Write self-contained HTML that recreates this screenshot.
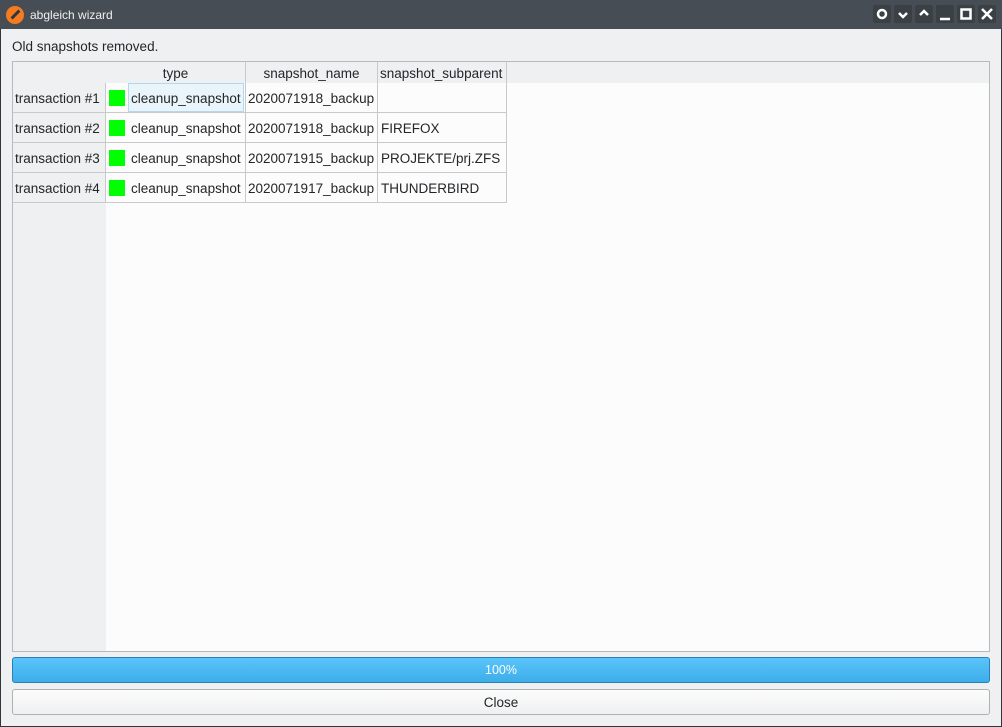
<!DOCTYPE html><html><head><style>
*{margin:0;padding:0;box-sizing:border-box}
body{width:1002px;height:727px;background:#31363b;font-family:"Liberation Sans","DejaVu Sans",sans-serif;font-size:13.5px;color:#232629;position:relative;overflow:hidden}
.tb{position:absolute;left:0;top:0;width:1002px;height:29px;background:#474d54;color:#eff0f1;font-size:12px}
.win{position:absolute;left:1px;top:29px;width:1000px;height:697px;background:#eff0f1}
.a{position:absolute}
.btn{position:absolute;top:5px;width:18px;height:18px;background:#3b4045;border-radius:2px}
.btn svg{position:absolute;left:0;top:0}
.c{position:absolute;border-right:1px solid #c8c9ca;border-bottom:1px solid #c8c9ca;height:30px;line-height:31px;padding-left:3px;white-space:nowrap;background:#fcfcfc}
.h{background:#eff0f1}
</style></head><body>
<div class="tb">
<div class="a" style="left:6px;top:6px;width:18px;height:18px;border-radius:50%;background:#f47b20"></div>
<div class="a" style="left:10px;top:13px;width:11px;height:3px;background:#31363b;transform:rotate(-45deg)"></div>
<div class="a" style="left:30px;top:8px">abgleich wizard</div>
<div class="btn" style="left:873px"><svg width="18" height="18"><circle cx="9" cy="9" r="4" fill="none" stroke="#fff" stroke-width="2.5"/></svg></div>
<div class="btn" style="left:894px"><svg width="18" height="18"><path d="M5 8l4 4 4-4" fill="none" stroke="#fff" stroke-width="2.5"/></svg></div>
<div class="btn" style="left:915px"><svg width="18" height="18"><path d="M5 10l4-4 4 4" fill="none" stroke="#fff" stroke-width="2.5"/></svg></div>
<div class="btn" style="left:936px"><svg width="18" height="18"><path d="M4 14h10" stroke="#fff" stroke-width="2.5"/></svg></div>
<div class="btn" style="left:957px"><svg width="18" height="18"><rect x="4.5" y="4.5" width="9" height="9" fill="none" stroke="#fff" stroke-width="2.5"/></svg></div>
<div class="btn" style="left:978px"><svg width="18" height="18"><path d="M4 4l10 10M14 4L4 14" stroke="#fff" stroke-width="2.5"/></svg></div>
</div>
<div class="win"></div>
<div class="a" style="left:12px;top:39px">Old snapshots removed.</div>
<div class="a" style="left:12px;top:61px;width:978px;height:591px;border:1px solid #b8b9ba;background:#fcfcfc"></div>
<div class="a" style="left:13px;top:62px;width:976px;height:21px;background:#eff0f1"></div>
<div class="a" style="left:13px;top:62px;width:93px;height:589px;background:#eff0f1"></div>
<div class="c h" style="left:13px;top:62px;width:93px;height:21px;border:none"></div>
<div class="c h" style="left:106px;top:62px;width:140px;height:21px;line-height:23px;text-align:center;padding:0;border-bottom:none">type</div>
<div class="c h" style="left:246px;top:62px;width:132px;height:21px;line-height:23px;text-align:center;padding:0;border-bottom:none">snapshot_name</div>
<div class="c h" style="left:378px;top:62px;width:129px;height:21px;line-height:23px;padding-left:2px;border-bottom:none">snapshot_subparent</div>
<div class="c h" style="left:13px;top:83px;width:93px;padding-left:2px">transaction #1</div>
<div class="c h" style="left:13px;top:113px;width:93px;padding-left:2px">transaction #2</div>
<div class="c h" style="left:13px;top:143px;width:93px;padding-left:2px">transaction #3</div>
<div class="c h" style="left:13px;top:173px;width:93px;padding-left:2px">transaction #4</div>
<div class="c" style="left:106px;top:83px;width:140px;padding-left:22px"><span style="display:inline-block;border:1px solid #b3d7ee;background:#eaf4fb;height:29px;line-height:29px;padding:0 2px">cleanup_snapshot</span></div>
<div class="c" style="left:106px;top:113px;width:140px;padding-left:25px">cleanup_snapshot</div>
<div class="c" style="left:106px;top:143px;width:140px;padding-left:25px">cleanup_snapshot</div>
<div class="c" style="left:106px;top:173px;width:140px;padding-left:25px">cleanup_snapshot</div>
<div class="a" style="left:109px;top:90px;width:16px;height:16px;background:#00ff00"></div>
<div class="a" style="left:109px;top:120px;width:16px;height:16px;background:#00ff00"></div>
<div class="a" style="left:109px;top:150px;width:16px;height:16px;background:#00ff00"></div>
<div class="a" style="left:109px;top:180px;width:16px;height:16px;background:#00ff00"></div>
<div class="c" style="left:246px;top:83px;width:132px;padding-left:2px">2020071918_backup</div>
<div class="c" style="left:246px;top:113px;width:132px;padding-left:2px">2020071918_backup</div>
<div class="c" style="left:246px;top:143px;width:132px;padding-left:2px">2020071915_backup</div>
<div class="c" style="left:246px;top:173px;width:132px;padding-left:2px">2020071917_backup</div>
<div class="c" style="left:378px;top:83px;width:129px"></div>
<div class="c" style="left:378px;top:113px;width:129px">FIREFOX</div>
<div class="c" style="left:378px;top:143px;width:129px">PROJEKTE/prj.ZFS</div>
<div class="c" style="left:378px;top:173px;width:129px">THUNDERBIRD</div>
<div class="a" style="left:12px;top:657px;width:978px;height:26px;border:1px solid #2d7fb8;border-radius:3px;background:linear-gradient(#5ac4fb,#3daee9);text-align:center;line-height:25px;color:#fcfcfc;font-size:12.5px">100%</div>
<div class="a" style="left:12px;top:689px;width:978px;height:26px;border:1px solid #b0b1b2;border-radius:3px;background:linear-gradient(#fcfcfc,#eff0f1);text-align:center;line-height:25px">Close</div>
</body></html>
